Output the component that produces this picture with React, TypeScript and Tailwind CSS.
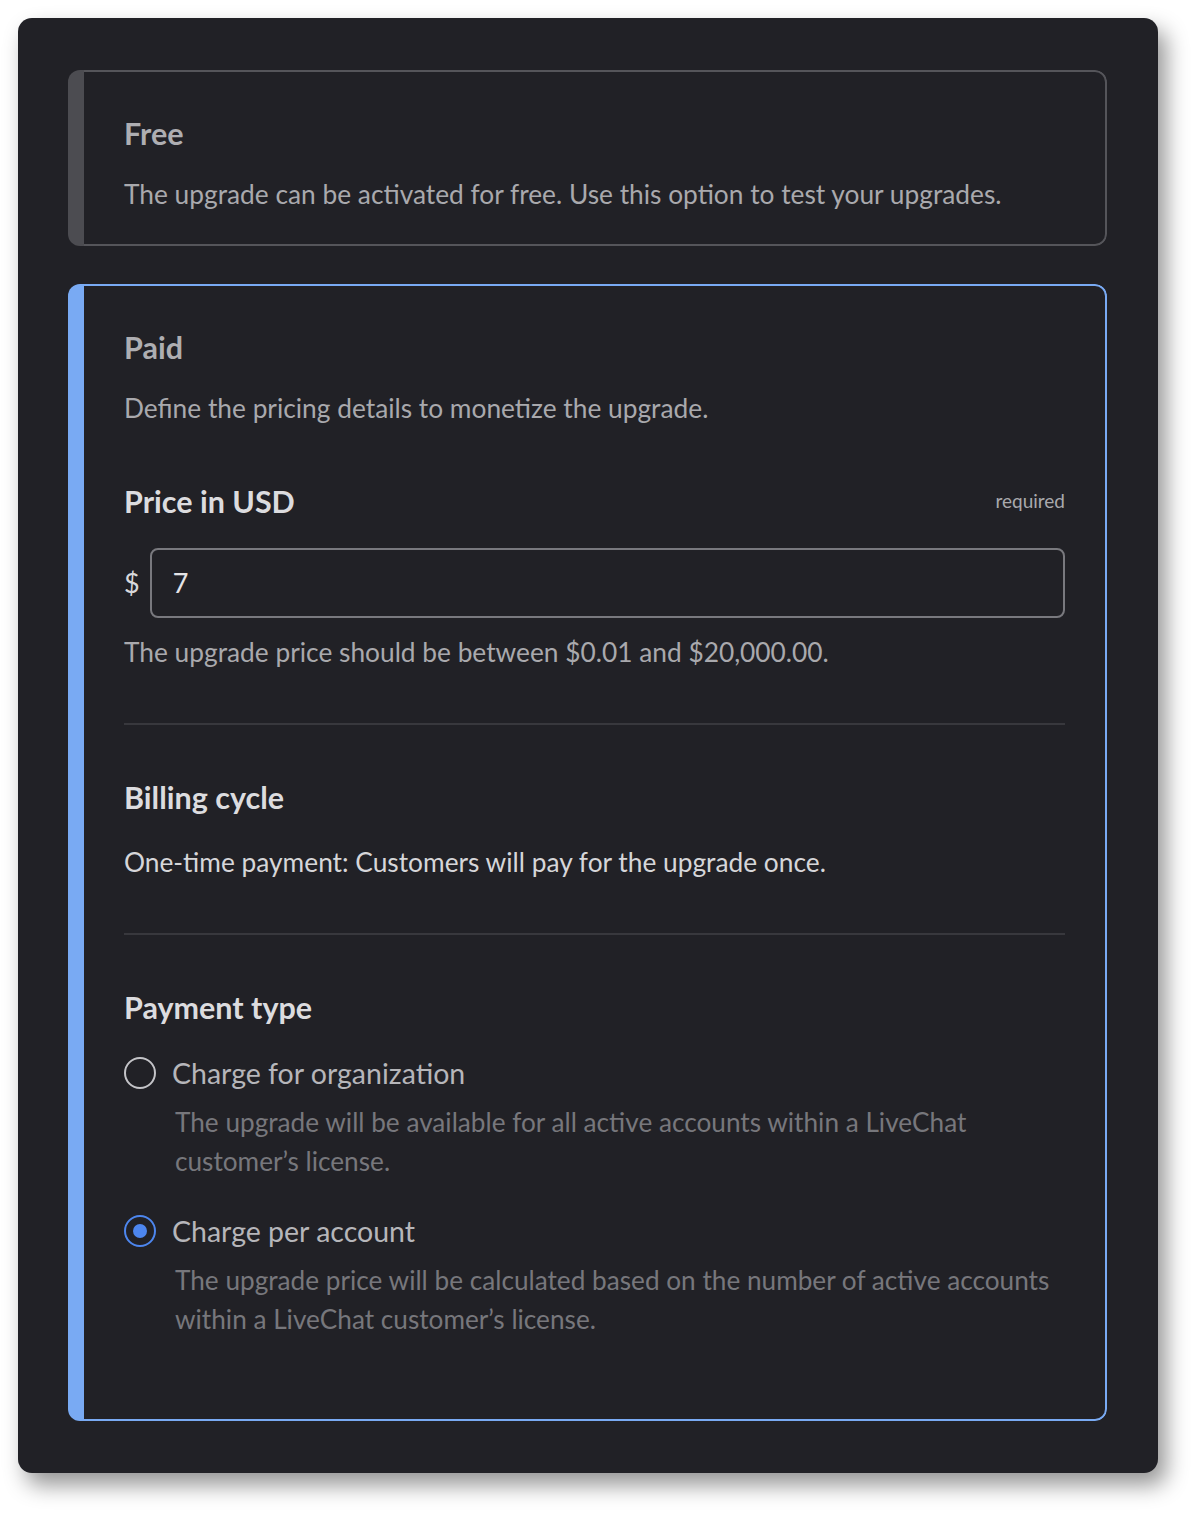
const font = { fontFamily: "Lato, 'Noto Sans', sans-serif" };

function Divider() {
  return <div className="h-[2px] bg-[#38383d]" />;
}

function Radio({ checked }: { checked: boolean }) {
  if (checked) {
    return (
      <span className="flex h-8 w-8 shrink-0 items-center justify-center rounded-full border-2 border-[#4d86ee]">
        <span className="h-[14px] w-[14px] rounded-full bg-[#4d86ee]" />
      </span>
    );
  }
  return <span className="h-8 w-8 shrink-0 rounded-full border-2 border-[#c4c4c8]" />;
}

function Option({ checked, label, children }: { checked: boolean; label: string; children: React.ReactNode }) {
  return (
    <div>
      <div className="flex h-9 items-center gap-4">
        <Radio checked={checked} />
        <span className="text-[28.5px] text-[#b6b6ba]">{label}</span>
      </div>
      <p className="mt-3 pl-[51px] text-[26.2px] leading-[39px] text-[#77777c]">{children}</p>
    </div>
  );
}

export default function App() {
  return (
    <div className="min-h-screen bg-white p-[18px]" style={font}>
      <div className="w-[1140px] rounded-[14px] bg-[#212126] pb-[52px] pl-[50px] pr-[51px] pt-[52px] shadow-[8px_12px_22px_rgba(0,0,0,0.42)]">
        {/* Free */}
        <div className="flex h-[176px] overflow-hidden rounded-[12px]">
          <div className="w-4 shrink-0 bg-[#4c4c51]" />
          <div className="flex-1 rounded-r-[12px] border-2 border-l-0 border-[#55555a] pl-[40px] pr-10 pt-[43px]">
            <h2 className="text-[30.5px] font-bold leading-9 text-[#aeaeb2]">Free</h2>
            <p className="mt-[25px] text-[26.3px] leading-9 text-[#a9a9ad]">
              The upgrade can be activated for free. Use this option to test your upgrades.
            </p>
          </div>
        </div>

        {/* Paid */}
        <div className="mt-[38px] flex overflow-hidden rounded-[12px]">
          <div className="w-4 shrink-0 bg-[#79aaf3]" />
          <div className="flex-1 rounded-r-[12px] border-2 border-l-0 border-[#79aaf3] pb-[80px] pl-[40px] pr-10 pt-[43px]">
            <h2 className="text-[30.5px] font-bold leading-9 text-[#aeaeb2]">Paid</h2>
            <p className="mt-[25px] text-[26.3px] leading-9 text-[#a9a9ad]">Define the pricing details to monetize the upgrade.</p>

            <div className="mt-[56px] flex items-center justify-between">
              <h3 className="text-[30.5px] font-bold leading-[38px] text-[#dcdcdf]">Price in USD</h3>
              <span className="text-[19px] text-[#a9a9ad]">required</span>
            </div>
            <div className="mt-[28px] flex items-center gap-[10px]">
              <span className="text-[27px] text-[#d8d8db]">$</span>
              <div className="flex h-[70px] flex-1 items-center rounded-[8px] border-2 border-[#79797e] px-[21px] text-[27px] text-[#e4e4e6]">
                7
              </div>
            </div>
            <p className="mt-[16px] text-[26.3px] leading-9 text-[#a9a9ad]">
              The upgrade price should be between $0.01 and $20,000.00.
            </p>

            <div className="mt-[53px]">
              <Divider />
            </div>

            <h3 className="mt-[53px] text-[30.5px] font-bold leading-[38px] text-[#dcdcdf]">Billing cycle</h3>
            <p className="mt-[28px] text-[26.3px] leading-9 text-[#d6d6d9]">
              One-time payment: Customers will pay for the upgrade once.
            </p>

            <div className="mt-[53px]">
              <Divider />
            </div>

            <h3 className="mt-[53px] text-[30.5px] font-bold leading-[38px] text-[#dcdcdf]">Payment type</h3>

            <div className="mt-[29px]">
              <Option checked={false} label="Charge for organization">
                The upgrade will be available for all active accounts within a LiveChat customer’s license.
              </Option>
            </div>
            <div className="mt-[32px]">
              <Option checked label="Charge per account">
                The upgrade price will be calculated based on the number of active accounts within a LiveChat customer’s license.
              </Option>
            </div>
          </div>
        </div>
      </div>
    </div>
  );
}
